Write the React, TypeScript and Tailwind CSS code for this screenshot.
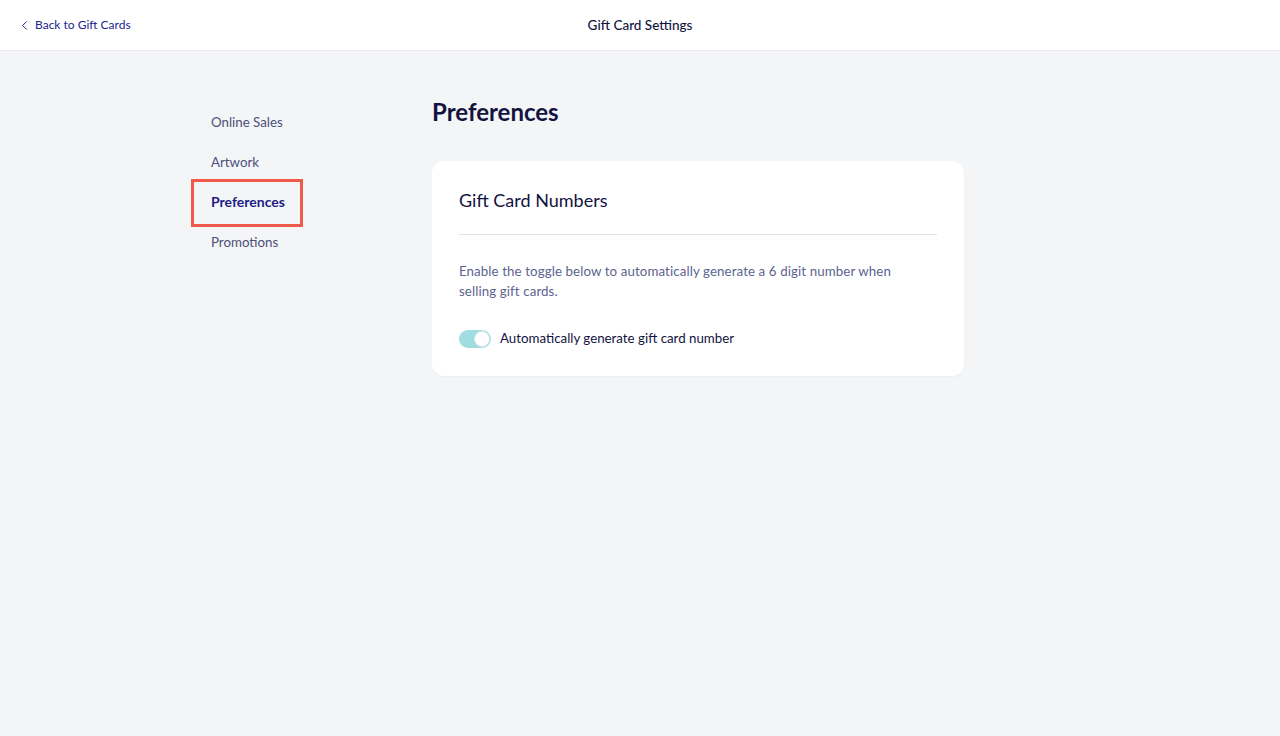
import { useState } from 'react';
import { ChevronLeft } from 'lucide-react';

const navItems = ['Online Sales', 'Artwork', 'Preferences', 'Promotions'];

function Toggle({ on, onChange }: { on: boolean; onChange: () => void }) {
  return (
    <button
      onClick={onChange}
      className={`relative w-[32px] h-[18px] rounded-full transition-colors ${on ? 'bg-[#9fdde1]' : 'bg-[#d5d8e2]'}`}
    >
      <span
        className={`absolute top-[1px] w-[16px] h-[16px] rounded-full bg-white border border-[#e3e6ec] transition-all ${on ? 'left-[15px]' : 'left-[1px]'}`}
      />
    </button>
  );
}

export default function App() {
  const [active] = useState('Preferences');
  const [autoNumber, setAutoNumber] = useState(true);

  return (
    <div className="min-h-[736px] bg-[#f4f5f7] font-['Lato',sans-serif] text-[#12143f]">
      {/* Top bar */}
      <header className="h-[51px] bg-white border-b border-[#e6e8ee] relative flex items-center justify-center">
        <a className="absolute left-[17px] top-0 h-full flex items-center gap-[3px] text-[12px] text-[#23238f] cursor-pointer">
          <ChevronLeft className="w-[15px] h-[15px]" strokeWidth={1.6} />
          Back to Gift Cards
        </a>
        <h1 className="text-[13.5px] pt-[1px] font-medium text-[#12143f]">Gift Card Settings</h1>
      </header>

      <div className="flex pl-[191px] pt-[52px]">
        {/* Sidebar */}
        <nav className="w-[241px] flex flex-col">
          {navItems.map((item) => {
            const isActive = item === active;
            return (
              <div key={item} className="relative h-[40px] flex items-center">
                <span
                  className={`px-[20px] ${isActive ? 'text-[14px] font-bold text-[#1c1c86] pb-[3px]' : 'text-[13.3px] text-[#4b5079]'}`}
                >
                  {item}
                </span>
                {isActive && (
                  <span className="absolute left-0 w-[112px] top-[-4px] bottom-[-4px] border-[3px] border-[#f05a4a] pointer-events-none" />
                )}
              </div>
            );
          })}
        </nav>

        {/* Main */}
        <main className="w-[532px] -mt-[6px]">
          <h2 className="text-[24px] font-bold text-[#12143f] leading-[30px]">Preferences</h2>

          <section className="mt-[34px] bg-white rounded-[12px] shadow-[0_1px_2px_rgba(20,25,60,0.04)] px-[27px] pt-[26px] pb-[27px]">
            <h3 className="text-[18px] text-[#12143f] leading-[26px] pb-[21px] border-b border-[#dfe3ee]">
              Gift Card Numbers
            </h3>
            <p className="mt-[26px] max-w-[432px] text-[13.3px] leading-[20px] text-[#5c6390] tracking-[0.1px]">
              Enable the toggle below to automatically generate a 6 digit number when selling gift cards.
            </p>
            <div className="mt-[28px] flex items-center gap-[9px]">
              <Toggle on={autoNumber} onChange={() => setAutoNumber(!autoNumber)} />
              <span className="text-[13.3px] text-[#12143f]">Automatically generate gift card number</span>
            </div>
          </section>
        </main>
      </div>
    </div>
  );
}
